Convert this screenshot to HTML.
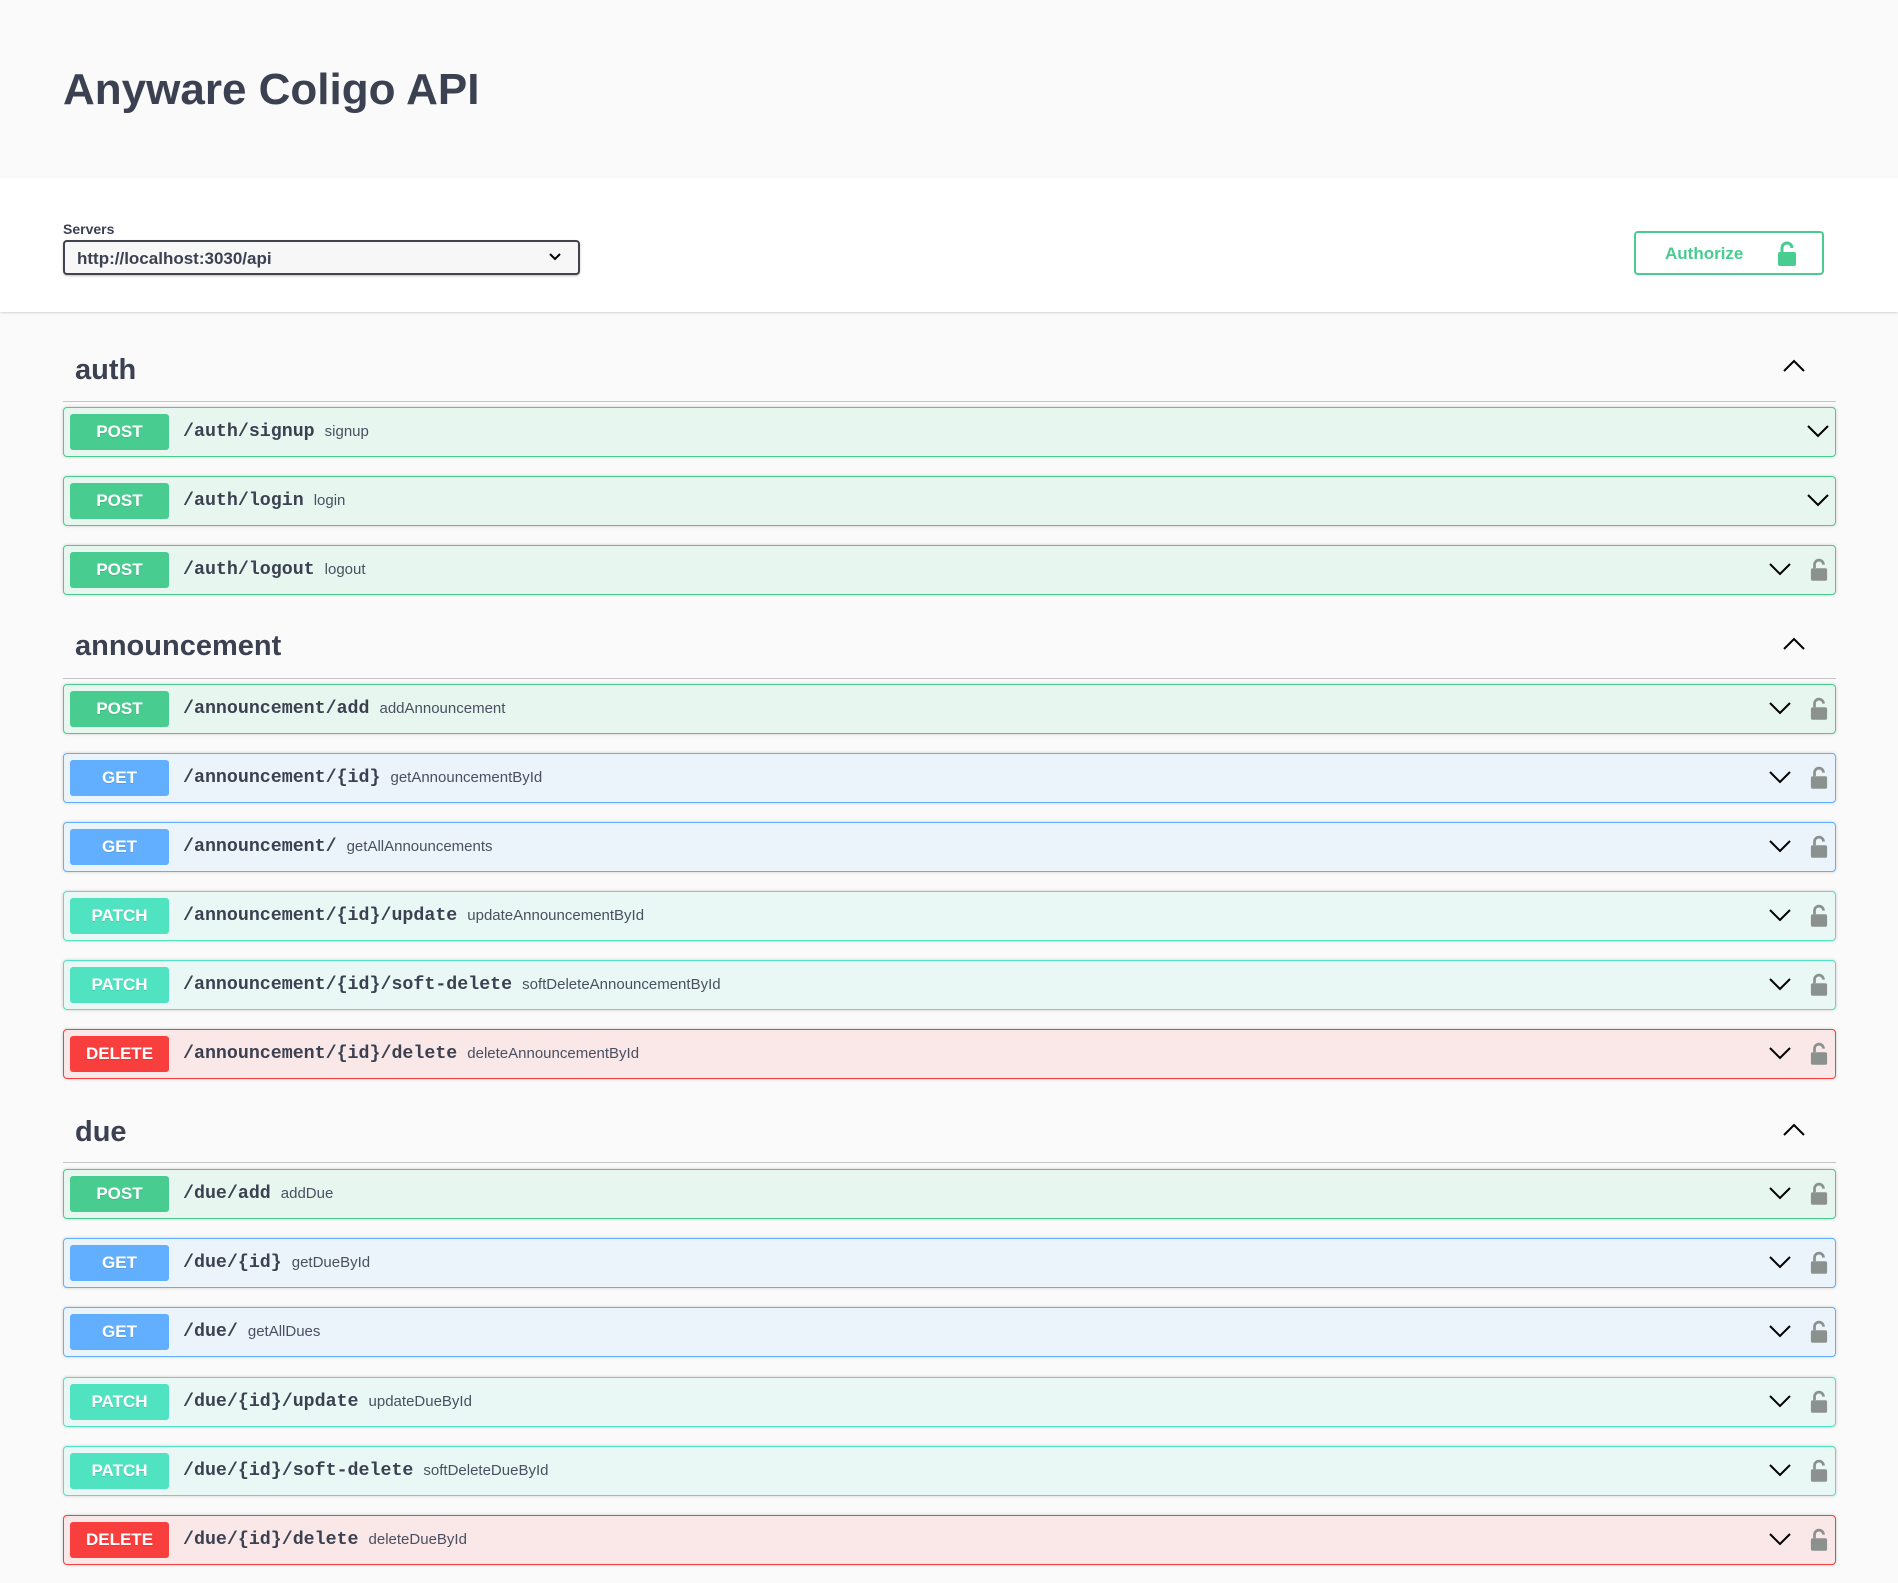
<!DOCTYPE html>
<html><head><meta charset="utf-8"><style>
*{box-sizing:border-box;margin:0;padding:0}
body{width:1898px;height:1583px;background:#fafafa;font-family:"Liberation Sans",sans-serif;color:#3b4151;position:relative;overflow:hidden}
.title{position:absolute;left:63px;top:65px;font-size:44px;font-weight:bold;color:#3b4151}
.bar{position:absolute;left:0;top:178px;width:1898px;height:134px;background:#fff;box-shadow:0 1px 2px rgba(0,0,0,.15)}
.slabel{position:absolute;left:63px;top:221px;font-size:14px;font-weight:bold}
.select{position:absolute;left:63px;top:240px;width:517px;height:35px;border:2px solid #41444e;border-radius:4px;background:#f7f7f7;box-shadow:0 1px 2px rgba(0,0,0,.25);font-size:17px;font-weight:bold;padding:7px 12px}
.select svg{position:absolute;right:16px;top:10px}
.auth{position:absolute;left:1634px;top:231px;width:190px;height:44px;border:2px solid #49cc90;border-radius:4px;color:#49cc90;font-size:17px;font-weight:bold;padding:11px 0 0 29px}
.auth svg{position:absolute;left:141px;top:8px}
.sec{position:absolute;left:75px;font-size:29px;font-weight:bold;color:#3b4151}
.line{position:absolute;left:63px;width:1773px;height:1px;background:#c5c5c8}
.up{position:absolute;left:1782px}
.row{position:absolute;left:63px;width:1773px;height:50px;border:1px solid;border-radius:4px;box-shadow:0 0 3px rgba(0,0,0,.19)}
.b{position:absolute;left:6px;top:6px;width:99px;height:36px;border-radius:3px;color:#fff;font-size:17px;font-weight:bold;text-align:center;line-height:36px;text-shadow:0 1px 0 rgba(0,0,0,.1)}
.p{position:absolute;left:119px;top:14px;font-family:"Liberation Mono",monospace;font-size:18.3px;font-weight:bold;color:#3b4151;white-space:nowrap}
.p span{font-family:"Liberation Sans",sans-serif;font-size:15px;font-weight:normal;color:#4a5060;margin-left:10px}
.ch{position:absolute;top:15px}
.lk{position:absolute;left:1746px;top:12px}
.post{background:#e8f6f0;border-color:#49cc90}.post .b{background:#49cc90}
.get{background:#ebf3fb;border-color:#61affe}.get .b{background:#61affe}
.patch{background:#e9f8f5;border-color:#50e3c2}.patch .b{background:#50e3c2}
.del{background:#fae7e7;border-color:#f93e3e}.del .b{background:#f93e3e}
</style></head><body>
<div class="title">Anyware Coligo API</div>
<div class="bar"></div>
<div class="slabel">Servers</div>
<div class="select">http://localhost:3030/api<svg width="14" height="10" viewBox="0 0 14 10"><path d="M2 2l5 5 5-5" fill="none" stroke="#000" stroke-width="2"/></svg></div>
<div class="auth">Authorize<svg width="20" height="26" viewBox="0 0 20 26"><path d="M5 11V7a5 5 0 0 1 10 0" fill="none" stroke="#49cc90" stroke-width="3"/><rect x="1" y="11" width="18" height="14" rx="2" fill="#49cc90"/></svg></div>

<div class="sec" style="top:354px">auth</div>
<svg class="up" style="top:358px" width="24" height="16" viewBox="0 0 24 16"><path d="M2 13L12 3l10 10" fill="none" stroke="#000" stroke-width="2"/></svg>
<div class="line" style="top:401px"></div>

<div class="sec" style="top:630px">announcement</div>
<svg class="up" style="top:636px" width="24" height="16" viewBox="0 0 24 16"><path d="M2 13L12 3l10 10" fill="none" stroke="#000" stroke-width="2"/></svg>
<div class="line" style="top:678px"></div>

<div class="sec" style="top:1116px">due</div>
<svg class="up" style="top:1122px" width="24" height="16" viewBox="0 0 24 16"><path d="M2 13L12 3l10 10" fill="none" stroke="#000" stroke-width="2"/></svg>
<div class="line" style="top:1162px"></div>

<div class="row post" style="top:407px"><div class="b">POST</div><div class="p">/auth/signup<span>signup</span></div><svg class="ch" style="left:1742px" width="24" height="16" viewBox="0 0 24 16"><path d="M2 3l10 10 10-10" fill="none" stroke="#000" stroke-width="2"/></svg></div>
<div class="row post" style="top:476px"><div class="b">POST</div><div class="p">/auth/login<span>login</span></div><svg class="ch" style="left:1742px" width="24" height="16" viewBox="0 0 24 16"><path d="M2 3l10 10 10-10" fill="none" stroke="#000" stroke-width="2"/></svg></div>
<div class="row post" style="top:545px"><div class="b">POST</div><div class="p">/auth/logout<span>logout</span></div><svg class="ch" style="left:1704px" width="24" height="16" viewBox="0 0 24 16"><path d="M2 3l10 10 10-10" fill="none" stroke="#000" stroke-width="2"/></svg><svg class="lk" width="18" height="24" viewBox="0 0 20 26"><path d="M5 11V7a5 5 0 0 1 10 0" fill="none" stroke="#8b918e" stroke-width="3"/><rect x="1" y="11" width="18" height="14" rx="2" fill="#8b918e"/></svg></div>

<div class="row post" style="top:684px"><div class="b">POST</div><div class="p">/announcement/add<span>addAnnouncement</span></div><svg class="ch" style="left:1704px" width="24" height="16" viewBox="0 0 24 16"><path d="M2 3l10 10 10-10" fill="none" stroke="#000" stroke-width="2"/></svg><svg class="lk" width="18" height="24" viewBox="0 0 20 26"><path d="M5 11V7a5 5 0 0 1 10 0" fill="none" stroke="#8b918e" stroke-width="3"/><rect x="1" y="11" width="18" height="14" rx="2" fill="#8b918e"/></svg></div>
<div class="row get" style="top:753px"><div class="b">GET</div><div class="p">/announcement/{id}<span>getAnnouncementById</span></div><svg class="ch" style="left:1704px" width="24" height="16" viewBox="0 0 24 16"><path d="M2 3l10 10 10-10" fill="none" stroke="#000" stroke-width="2"/></svg><svg class="lk" width="18" height="24" viewBox="0 0 20 26"><path d="M5 11V7a5 5 0 0 1 10 0" fill="none" stroke="#8b918e" stroke-width="3"/><rect x="1" y="11" width="18" height="14" rx="2" fill="#8b918e"/></svg></div>
<div class="row get" style="top:822px"><div class="b">GET</div><div class="p">/announcement/<span>getAllAnnouncements</span></div><svg class="ch" style="left:1704px" width="24" height="16" viewBox="0 0 24 16"><path d="M2 3l10 10 10-10" fill="none" stroke="#000" stroke-width="2"/></svg><svg class="lk" width="18" height="24" viewBox="0 0 20 26"><path d="M5 11V7a5 5 0 0 1 10 0" fill="none" stroke="#8b918e" stroke-width="3"/><rect x="1" y="11" width="18" height="14" rx="2" fill="#8b918e"/></svg></div>
<div class="row patch" style="top:891px"><div class="b">PATCH</div><div class="p">/announcement/{id}/update<span>updateAnnouncementById</span></div><svg class="ch" style="left:1704px" width="24" height="16" viewBox="0 0 24 16"><path d="M2 3l10 10 10-10" fill="none" stroke="#000" stroke-width="2"/></svg><svg class="lk" width="18" height="24" viewBox="0 0 20 26"><path d="M5 11V7a5 5 0 0 1 10 0" fill="none" stroke="#8b918e" stroke-width="3"/><rect x="1" y="11" width="18" height="14" rx="2" fill="#8b918e"/></svg></div>
<div class="row patch" style="top:960px"><div class="b">PATCH</div><div class="p">/announcement/{id}/soft-delete<span>softDeleteAnnouncementById</span></div><svg class="ch" style="left:1704px" width="24" height="16" viewBox="0 0 24 16"><path d="M2 3l10 10 10-10" fill="none" stroke="#000" stroke-width="2"/></svg><svg class="lk" width="18" height="24" viewBox="0 0 20 26"><path d="M5 11V7a5 5 0 0 1 10 0" fill="none" stroke="#8b918e" stroke-width="3"/><rect x="1" y="11" width="18" height="14" rx="2" fill="#8b918e"/></svg></div>
<div class="row del" style="top:1029px"><div class="b">DELETE</div><div class="p">/announcement/{id}/delete<span>deleteAnnouncementById</span></div><svg class="ch" style="left:1704px" width="24" height="16" viewBox="0 0 24 16"><path d="M2 3l10 10 10-10" fill="none" stroke="#000" stroke-width="2"/></svg><svg class="lk" width="18" height="24" viewBox="0 0 20 26"><path d="M5 11V7a5 5 0 0 1 10 0" fill="none" stroke="#8b918e" stroke-width="3"/><rect x="1" y="11" width="18" height="14" rx="2" fill="#8b918e"/></svg></div>

<div class="row post" style="top:1169px"><div class="b">POST</div><div class="p">/due/add<span>addDue</span></div><svg class="ch" style="left:1704px" width="24" height="16" viewBox="0 0 24 16"><path d="M2 3l10 10 10-10" fill="none" stroke="#000" stroke-width="2"/></svg><svg class="lk" width="18" height="24" viewBox="0 0 20 26"><path d="M5 11V7a5 5 0 0 1 10 0" fill="none" stroke="#8b918e" stroke-width="3"/><rect x="1" y="11" width="18" height="14" rx="2" fill="#8b918e"/></svg></div>
<div class="row get" style="top:1238px"><div class="b">GET</div><div class="p">/due/{id}<span>getDueById</span></div><svg class="ch" style="left:1704px" width="24" height="16" viewBox="0 0 24 16"><path d="M2 3l10 10 10-10" fill="none" stroke="#000" stroke-width="2"/></svg><svg class="lk" width="18" height="24" viewBox="0 0 20 26"><path d="M5 11V7a5 5 0 0 1 10 0" fill="none" stroke="#8b918e" stroke-width="3"/><rect x="1" y="11" width="18" height="14" rx="2" fill="#8b918e"/></svg></div>
<div class="row get" style="top:1307px"><div class="b">GET</div><div class="p">/due/<span>getAllDues</span></div><svg class="ch" style="left:1704px" width="24" height="16" viewBox="0 0 24 16"><path d="M2 3l10 10 10-10" fill="none" stroke="#000" stroke-width="2"/></svg><svg class="lk" width="18" height="24" viewBox="0 0 20 26"><path d="M5 11V7a5 5 0 0 1 10 0" fill="none" stroke="#8b918e" stroke-width="3"/><rect x="1" y="11" width="18" height="14" rx="2" fill="#8b918e"/></svg></div>
<div class="row patch" style="top:1377px"><div class="b">PATCH</div><div class="p">/due/{id}/update<span>updateDueById</span></div><svg class="ch" style="left:1704px" width="24" height="16" viewBox="0 0 24 16"><path d="M2 3l10 10 10-10" fill="none" stroke="#000" stroke-width="2"/></svg><svg class="lk" width="18" height="24" viewBox="0 0 20 26"><path d="M5 11V7a5 5 0 0 1 10 0" fill="none" stroke="#8b918e" stroke-width="3"/><rect x="1" y="11" width="18" height="14" rx="2" fill="#8b918e"/></svg></div>
<div class="row patch" style="top:1446px"><div class="b">PATCH</div><div class="p">/due/{id}/soft-delete<span>softDeleteDueById</span></div><svg class="ch" style="left:1704px" width="24" height="16" viewBox="0 0 24 16"><path d="M2 3l10 10 10-10" fill="none" stroke="#000" stroke-width="2"/></svg><svg class="lk" width="18" height="24" viewBox="0 0 20 26"><path d="M5 11V7a5 5 0 0 1 10 0" fill="none" stroke="#8b918e" stroke-width="3"/><rect x="1" y="11" width="18" height="14" rx="2" fill="#8b918e"/></svg></div>
<div class="row del" style="top:1515px"><div class="b">DELETE</div><div class="p">/due/{id}/delete<span>deleteDueById</span></div><svg class="ch" style="left:1704px" width="24" height="16" viewBox="0 0 24 16"><path d="M2 3l10 10 10-10" fill="none" stroke="#000" stroke-width="2"/></svg><svg class="lk" width="18" height="24" viewBox="0 0 20 26"><path d="M5 11V7a5 5 0 0 1 10 0" fill="none" stroke="#8b918e" stroke-width="3"/><rect x="1" y="11" width="18" height="14" rx="2" fill="#8b918e"/></svg></div>
</body></html>
